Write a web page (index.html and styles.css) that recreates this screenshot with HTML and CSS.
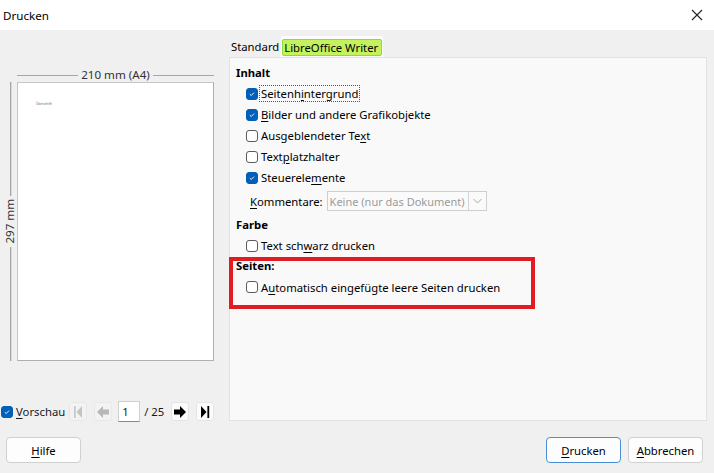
FILE: index.html
```html
<!DOCTYPE html>
<html lang="de">
<head>
<meta charset="utf-8">
<title>Drucken</title>
<link rel="stylesheet" href="styles.css">
</head>
<body>
<div class="dialog">
  <div class="titlebar">
    <span class="title">Drucken</span>
    <svg class="close" width="12" height="12" viewBox="0 0 12 12"><path d="M1 1 L11 11 M11 1 L1 11" stroke="#222" stroke-width="1.1" fill="none"/></svg>
  </div>
  <div class="main">
    <div class="left">
      <div class="hruler"><span class="rline"></span><span class="rlabel">210 mm (A4)</span><span class="rline"></span></div>
      <div class="pagerow">
        <div class="vruler"><span class="vline"></span><span class="vlabel">297 mm</span><span class="vline"></span></div>
        <div class="page"><span class="pagetext">Überschrift</span></div>
      </div>
      <div class="nav">
        <span class="cb checked"><svg width="12" height="12" viewBox="0 0 12 12"><path d="M3.4 6.2 L5.1 7.8 L8.4 4.4" stroke="#fff" stroke-width="1.1" fill="none"/></svg></span>
        <span class="navlabel"><u>V</u>orschau</span>
        <span class="nbtn disabled first"><svg width="12" height="14" viewBox="0 0 12 14"><rect x="2" y="1" width="1.6" height="12" fill="#c4c4c4"/><path d="M10 1 L4.5 7 L10 13 Z" fill="#c4c4c4"/></svg></span>
        <span class="nbtn disabled prev"><svg width="14" height="14" viewBox="0 0 14 14"><path d="M1 7 L7 1 L7 4.5 L13 4.5 L13 9.5 L7 9.5 L7 13 Z" fill="#b8b8b8"/></svg></span>
        <span class="spin">1</span>
        <span class="total">/ 25</span>
        <span class="nbtn next"><svg width="14" height="14" viewBox="0 0 14 14"><path d="M13 7 L7 1 L7 4.5 L1 4.5 L1 9.5 L7 9.5 L7 13 Z" fill="#000"/></svg></span>
        <span class="nbtn last"><svg width="12" height="14" viewBox="0 0 12 14"><path d="M2 1 L7.5 7 L2 13 Z" fill="#000"/><rect x="8.4" y="1" width="1.8" height="12" fill="#000"/></svg></span>
      </div>
    </div>
    <div class="right">
      <div class="tabs">
        <span class="tab">Standard</span>
        <span class="tab active"><span class="hl">LibreOffice Writer</span></span>
      </div>
      <div class="panel">
        <div class="heading">Inhalt</div>
        <div class="row"><span class="cb checked"><svg width="12" height="12" viewBox="0 0 12 12"><path d="M3.4 6.2 L5.1 7.8 L8.4 4.4" stroke="#fff" stroke-width="1.1" fill="none"/></svg></span><span class="label focus">Seitenh<u>i</u>ntergrund</span></div>
        <div class="row"><span class="cb checked"><svg width="12" height="12" viewBox="0 0 12 12"><path d="M3.4 6.2 L5.1 7.8 L8.4 4.4" stroke="#fff" stroke-width="1.1" fill="none"/></svg></span><span class="label"><u>B</u>ilder und andere Grafikobjekte</span></div>
        <div class="row"><span class="cb"></span><span class="label">Ausgeblendeter Te<u>x</u>t</span></div>
        <div class="row"><span class="cb"></span><span class="label">Text<u>p</u>latzhalter</span></div>
        <div class="row"><span class="cb checked"><svg width="12" height="12" viewBox="0 0 12 12"><path d="M3.4 6.2 L5.1 7.8 L8.4 4.4" stroke="#fff" stroke-width="1.1" fill="none"/></svg></span><span class="label">Steuerele<u>m</u>ente</span></div>
        <div class="selrow"><span class="sellabel"><u>K</u>ommentare:</span><span class="select"><span class="seltext">Keine (nur das Dokument)</span><span class="selarrow"><svg width="9" height="6" viewBox="0 0 9 6"><path d="M0.5 1 L4.5 5 L8.5 1" stroke="#a8a8a8" stroke-width="1" fill="none"/></svg></span></span></div>
        <div class="heading farbe">Farbe</div>
        <div class="row"><span class="cb"></span><span class="label">Text sch<u>w</u>arz drucken</span></div>
        <div class="seiten">
          <div class="heading">Seiten:</div>
          <div class="row tall"><span class="cb"></span><span class="label">A<u>u</u>tomatisch eingefügte leere Seiten drucken</span></div>
        </div>
      </div>
    </div>
  </div>
  <div class="footer">
    <span class="btn"><u>H</u>ilfe</span>
    <span class="spacer"></span>
    <span class="btn primary"><u>D</u>rucken</span>
    <span class="btn"><u>A</u>bbrechen</span>
  </div>
</div>
</body>
</html>
```
FILE: styles.css
```css
*, *::before, *::after { box-sizing: border-box; }
html, body { margin: 0; padding: 0; }
body {
  width: 714px;
  height: 473px;
  overflow: hidden;
  font-family: "Noto Sans", "Open Sans", sans-serif;
  font-size: 11.3px;
  color: #1a1a1a;
  background: #f0f0f0;
}
u { text-decoration-thickness: 1px; text-underline-offset: 2px; }
.dialog { width: 714px; height: 473px; display: flex; flex-direction: column; }

.titlebar {
  height: 30px;
  background: #fff;
  display: flex;
  align-items: center;
  padding-left: 3px;
  padding-right: 11px;
  font-size: 11.6px;
}
.title { flex: 1; color: #000; }
.close { display: block; }

.main { height: 400px; display: flex; }
.left { width: 229px; flex: none; display: flex; flex-direction: column; padding-top: 38px; }
.hruler { display: flex; align-items: center; height: 14px; margin-left: 17px; width: 197px; }
.rline { flex: 1; height: 1px; background: #a6a6a6; }
.rlabel { padding: 0 3px; color: #333; line-height: 14px; font-size: 11.6px; }
.pagerow { display: flex; height: 279px; }
.vruler { width: 17px; display: flex; flex-direction: column; align-items: center; padding-left: 3px; }
.vline { flex: 1; width: 1px; background: #a6a6a6; box-shadow: 1px 0 0 #d8d8d8; }
.vlabel { writing-mode: vertical-rl; transform: rotate(180deg); color: #333; padding: 3px 0; line-height: 14px; font-size: 11.6px; }
.page {
  width: 197px;
  background: #fff;
  border: 1px solid #c6c6c6;
  border-right-color: #b0b0b0;
  border-bottom-color: #b0b0b0;
  padding: 19px 0 0 18px;
}
.pagetext { display: block; font-size: 3px; line-height: 4px; color: #666; }

.nav { display: flex; align-items: center; height: 21px; margin-top: 40px; padding-left: 1px; }
.nav .cb { margin-top: 1px; }
.navlabel { margin-left: 3px; margin-right: 4px; }
.nbtn {
  width: 18px; height: 19px;
  flex: none;
  border: 1px solid #e4e4e4;
  border-radius: 3px;
  background: #fbfbfb;
  display: flex; align-items: center; justify-content: center;
}
.nbtn.disabled { background: #f3f3f3; border-color: #e8e8e8; }
.nbtn.prev { margin-left: 7px; }
.spin {
  width: 22px; height: 21px;
  flex: none;
  margin-left: 6px;
  background: #fff;
  border: 1px solid #d0d0d0;
  border-bottom-color: #8a8a8a;
  padding-left: 3px;
  line-height: 19px;
}
.total { margin-left: 4px; margin-right: 7px; }
.nbtn.last { margin-left: 7px; }

.right { flex: 1; display: flex; flex-direction: column; padding-top: 6px; margin-right: 7px; }
.tabs { display: flex; height: 21px; align-items: stretch; }
.tab { display: flex; align-items: center; padding: 0 2px; color: #000; }
.tab.active { background: #fbfbfb; padding: 0 1px; }
.hl {
  background: #c4f25c;
  border: 1px solid #95d545;
  border-radius: 2px;
  padding: 0 3px 0 1px;
  line-height: 15px;
  margin-top: 2px;
}
.panel {
  height: 364px;
  background: #f9f9f9;
  border: 1px solid #e2e2e2;
  padding: 5px 0 0 6px;
}
.heading { height: 20px; line-height: 20px; font-weight: bold; color: #000; }
.heading.farbe { height: 21px; line-height: 21px; }
.row { height: 21px; display: flex; align-items: center; padding-left: 10px; }
.row.tall { height: 22px; }
.cb {
  width: 12px; height: 12px;
  border: 1px solid #5c5c5c;
  border-radius: 3px;
  background: #fff;
  flex: none;
  display: flex; align-items: center; justify-content: center;
}
.cb.checked { background: #005fb8; border-color: #005fb8; }
.cb svg { display: block; }
.label { margin-left: 3px; color: #000; white-space: nowrap; }
.label.focus { outline: 1px dotted #555; outline-offset: 0; padding: 0 1px; margin-left: 2px; }
.selrow { height: 26px; display: flex; align-items: center; padding-left: 14px; gap: 4px; }
.sellabel { flex: none; color: #000; white-space: nowrap; }
.select {
  width: 160px; height: 20px;
  flex: none;
  border: 1px solid #cfcfcf;
  background: #fafafa;
  display: flex; align-items: center;
}
.seltext { flex: 1; color: #9a9a9a; padding-left: 2px; white-space: nowrap; overflow: hidden; font-size: 11px; }
.selarrow { width: 18px; height: 100%; flex: none; border-left: 1px solid #d4d4d4; display: flex; align-items: center; justify-content: center; }

.seiten { position: relative; }
.seiten::after {
  content: "";
  position: absolute;
  top: 1px;
  left: -7px;
  width: 306px;
  height: 52px;
  border: 4px solid #e31b23;
  pointer-events: none;
}

.footer { flex: 1; display: flex; align-items: flex-start; padding: 7px 11px 0 6px; gap: 7px; }
.spacer { flex: 1; }
.btn {
  width: 75px; height: 26px;
  background: #fdfdfd;
  border: 1px solid #d0d0d0;
  border-radius: 4px;
  display: flex; align-items: center; justify-content: center;
  color: #000;
}
.btn.primary { border-color: #4a8fd6; }
```
